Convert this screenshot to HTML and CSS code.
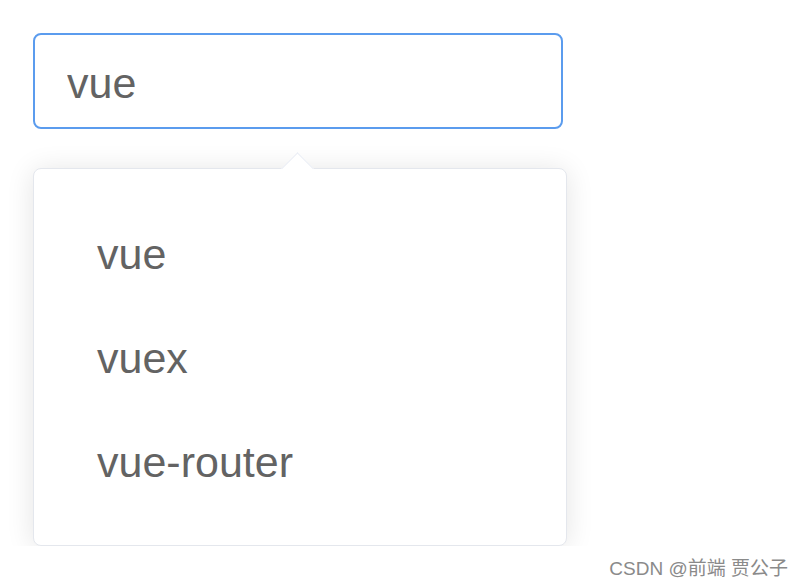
FILE: index.html
```html
<!DOCTYPE html>
<html lang="zh-CN">
<head>
    <meta charset="UTF-8">
    <title>Autocomplete</title>
    <link rel="stylesheet" href="styles.css">
</head>
<body>
    <div class="autocomplete">
        <div class="input-wrap">
            <input type="text" class="search-input" value="vue">
        </div>
        <div class="suggestions">
            <span class="arrow"></span>
            <ul class="suggestion-list">
                <li>vue</li>
                <li>vuex</li>
                <li>vue-router</li>
            </ul>
        </div>
    </div>
    <div class="watermark">CSDN @前端 贾公子</div>
</body>
</html>
```

FILE: styles.css
```css
body {
    font-family: "Liberation Sans", Arial, sans-serif;
    margin: 0;
    padding: 33px 0 0 33px;
    background: #fff;
    color: #636363;
}
.autocomplete {
    width: 534px;
}
.search-input {
    box-sizing: border-box;
    width: 530px;
    height: 96px;
    padding: 4px 32px 0;
    border: 2px solid #5b9cee;
    border-radius: 8px;
    outline: none;
    font-family: inherit;
    font-size: 43px;
    color: #636363;
    background: #fff;
}
.suggestions {
    position: relative;
    margin-top: 39px;
    height: 378px;
    box-sizing: border-box;
    border: 1px solid #e4e7ed;
    border-radius: 8px;
    background: #fff;
    box-shadow: 0 2px 28px rgba(0, 0, 0, 0.11);
}
.arrow {
    position: absolute;
    top: -12px;
    left: 252px;
    width: 22px;
    height: 22px;
    background: #fff;
    border-top: 1px solid #ebeef5;
    border-left: 1px solid #ebeef5;
    transform: rotate(45deg);
}
.suggestion-list {
    position: relative;
    list-style: none;
    margin: 0;
    padding: 33px 0 0;
}
.suggestion-list li {
    padding-left: 63px;
    height: 104px;
    line-height: 104px;
    font-size: 43px;
}
.watermark {
    position: absolute;
    right: 14px;
    bottom: 8px;
    font-family: "Liberation Sans", "Noto Sans CJK SC", sans-serif;
    font-size: 19px;
    color: #8a8a8a;
}
```
